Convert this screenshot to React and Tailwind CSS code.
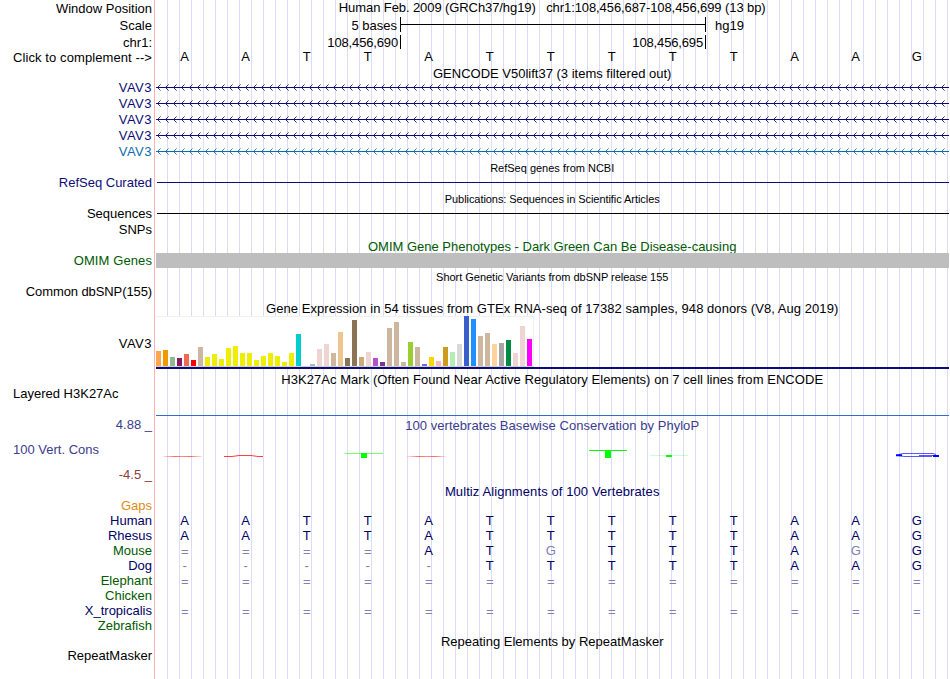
import React from "react";
import clsx from "clsx";

const BASES = "AATTATTTTTAAG";

const transcripts = [
  { id: 1, color: "text-[#0c0c78]" },
  { id: 2, color: "text-[#0c0c78]" },
  { id: 3, color: "text-[#0c0c78]" },
  { id: 4, color: "text-[#0c0c78]" },
  { id: 5, color: "text-[#0c6cb0]" },
];

// one entry per tissue: bar height and colour
const tissues = [
  [15, "#ffa54f"], [16, "#ee9a00"], [9, "#8fbc8f"], [8, "#8b1c62"], [12, "#ee6a50"], [6, "#ff0000"],
  [19, "#cdb79e"], [9, "#eeee00"], [12, "#eeee00"], [7, "#eeee00"], [18, "#eeee00"], [20, "#eeee00"],
  [13, "#eeee00"], [13, "#eeee00"], [6, "#eeee00"], [10, "#eeee00"], [13, "#eeee00"], [10, "#eeee00"],
  [4, "#eeee00"], [13, "#eeee00"], [32, "#00cdcd"], [0, "#ee82ee"], [2, "#9ac0cd"], [17, "#eed5d2"],
  [22, "#eed5d2"], [13, "#cdb79e"], [34, "#eec591"], [8, "#8b7355"], [46, "#8b7355"], [9, "#cdaa7d"],
  [14, "#eed5d2"], [8, "#b452cd"], [4, "#7a378b"], [38, "#cdb79e"], [44, "#cdb79e"], [4, "#cdb79e"],
  [24, "#9acd32"], [19, "#cdb79e"], [2, "#7a67ee"], [9, "#ffd700"], [5, "#ffb6c1"], [19, "#cd9b1d"],
  [14, "#b4eeb4"], [22, "#d9d9d9"], [50, "#3a5fcd"], [47, "#1e90ff"], [30, "#cdb79e"], [33, "#cdb79e"],
  [22, "#ffd39b"], [23, "#a6a6a6"], [26, "#008b45"], [13, "#eed5d2"], [40, "#eed5d2"], [27, "#ff00ff"],
];

const species = [
  { name: "Gaps", color: "text-[#e08c14]", seq: "" },
  { name: "Human", color: "text-[#000064]", seq: "AATTATTTTTAAG" },
  { name: "Rhesus", color: "text-[#000064]", seq: "AATTATTTTTAAG" },
  { name: "Mouse", color: "text-[#005a00]", seq: "====ATgTTTAgG" },
  { name: "Dog", color: "text-[#000064]", seq: "-----TTTTTAAG" },
  { name: "Elephant", color: "text-[#005a00]", seq: "=============" },
  { name: "Chicken", color: "text-[#005a00]", seq: "" },
  { name: "X_tropicalis", color: "text-[#000064]", seq: "=============" },
  { name: "Zebrafish", color: "text-[#005a00]", seq: "" },
];

const Row = ({ label, height, labelClass, className, children }) => (
  <div className={clsx("flex shrink-0", height)}>
    <div
      className={clsx(
        "flex w-[155px] shrink-0 items-center pr-[3px]",
        labelClass || "justify-end"
      )}
    >
      {label}
    </div>
    <div className={clsx("flex w-[794px] shrink-0 pl-px", className || "items-center")}>
      {children}
    </div>
  </div>
);

const Title = ({ className, children }) => (
  <div className={clsx("-ml-[0.3px] w-[793px] text-center whitespace-pre", className)}>
    {children}
  </div>
);

const Sequence = ({ seq, className }) => (
  <div className={clsx("-ml-[1.8px] flex", className)}>
    {seq.split("").map((base, index) => (
      <span
        key={index}
        className={clsx(
          "w-[61px] text-center",
          /[=g-]/.test(base) && "text-[#8080b2]",
          base === "=" && "translate-y-px"
        )}
      >
        {base.toUpperCase()}
      </span>
    ))}
  </div>
);

// intron line with strand arrows pointing left
const Intron = ({ id, className }) => (
  <svg width="793" height="16" className={className} shapeRendering="crispEdges">
    <defs>
      <pattern id={`strand-${id}`} width="8" height="16" x="1" patternUnits="userSpaceOnUse">
        <path d="M1 7h1v1h-1zM1 9h1v1h-1zM2 6h1v1h-1zM2 10h1v1h-1z" fill="currentColor" fillOpacity="0.85" />
        <path d="M3 5h1v1h-1zM3 11h1v1h-1z" fill="currentColor" fillOpacity="0.5" />
      </pattern>
    </defs>
    <rect y="8" width="793" height="1" fill="currentColor" />
    <rect width="793" height="16" fill={`url(#strand-${id})`} />
  </svg>
);

const GeneExpression = () => (
  <div className="w-[793px]">
    <div className="flex h-[51px] w-[378px] items-end gap-[2px] border-t border-r border-b border-t-[#f0f0f0] border-r-[#f0f0f0] border-b-[#d0d0d0] bg-white">
      {tissues.map(([height, color], index) => (
        <div
          key={index}
          className="w-[5px] shrink-0"
          style={{ height, backgroundColor: color }}
        />
      ))}
    </div>
    <div className="h-[2px] bg-[#0c0c78]" />
  </div>
);

// squashed base letters, scaled by their score
const Conservation = () => (
  <svg width="793" height="32">
    <defs>
      <linearGradient id="fade">
        <stop offset="0" stopColor="#f00" stopOpacity="0.1" />
        <stop offset="0.3" stopColor="#f00" stopOpacity="0.6" />
        <stop offset="0.5" stopColor="#f00" stopOpacity="0.45" />
        <stop offset="0.7" stopColor="#f00" stopOpacity="0.6" />
        <stop offset="1" stopColor="#f00" stopOpacity="0.1" />
      </linearGradient>
    </defs>
    <rect x="7" y="22" width="39" height="1" fill="url(#fade)" />
    <path d="M68 22.5L76 22.5L83 21.5H95L102 22.5H107" fill="none" stroke="#f00" strokeOpacity="0.75" />
    <rect x="251" y="22" width="39" height="1" fill="url(#fade)" />
    <g fill="#0f0" shapeRendering="crispEdges">
      <rect x="189" y="19" width="38" height="1" fillOpacity="0.55" />
      <rect x="205" y="19" width="6" height="5" />
      <rect x="433" y="16" width="38" height="1" />
      <rect x="449" y="16" width="6" height="8" />
      <rect x="494" y="21" width="38" height="1" fillOpacity="0.2" />
      <rect x="510" y="21" width="6" height="2" />
    </g>
    <g fill="none" stroke="#00f">
      <path d="M743 20.5L747 19.5H777L780 20.5M743 21.5L748 22.5H776M763 21.5H778" strokeOpacity="0.65" />
      <path d="M740 21.3H746M777 22H783" strokeWidth="2" />
    </g>
  </svg>
);

const App = () => {
  return (
    <div className="relative h-[679px] w-[950px] overflow-hidden bg-white font-['Liberation_Sans',Arial,sans-serif] text-[13px] leading-[14px] whitespace-nowrap text-black">
      {/* Guide lines behind every track */}
      <div className="absolute inset-y-0 left-[154px] w-px bg-[#ffb0b0]" />
      <div className="absolute inset-y-0 right-0 left-[167px] bg-[repeating-linear-gradient(to_right,#dcdcf8_0px,#dcdcf8_1px,transparent_1px,transparent_12px)]" />

      <div className="relative flex flex-col">
        {/* Position and ruler */}
        <Row label="Window Position" height="h-[17px]">
          <Title className="pb-px tracking-[-0.09px]">
            {"Human Feb. 2009 (GRCh37/hg19)   chr1:108,456,687-108,456,699 (13 bp)"}
          </Title>
        </Row>
        <Row label="Scale" height="h-[17px]">
          <div className="w-[241px] text-right">5 bases</div>
          <div className="mb-[2px] ml-[3px] flex h-[15px] w-[306px] items-center border-x border-black">
            <div className="h-px w-full bg-black" />
          </div>
          <div className="ml-[9px]">hg19</div>
        </Row>
        <Row label="chr1:" height="h-[16px]" labelClass="justify-end pt-px">
          <div className="flex h-[14px] w-[245px] items-center justify-end border-r border-black pt-[2px] pr-[2px] tracking-[-0.15px]">
            108,456,690
          </div>
          <div className="flex h-[14px] w-[305px] items-center justify-end border-r border-black pt-[2px] pr-[2px] tracking-[-0.15px]">
            108,456,695
          </div>
        </Row>
        <Row
          label="Click to complement -->"
          height="h-[15px]"
          labelClass="justify-end tracking-[0.09px]"
        >
          <Sequence seq={BASES} className="pb-[2px]" />
        </Row>

        {/* Genes */}
        <Row height="h-[14px]">
          <Title className="pt-[3px]">GENCODE V50lift37 (3 items filtered out)</Title>
        </Row>
        {transcripts.map(({ id, color }) => (
          <Row
            key={id}
            label="VAV3"
            height="h-[16px]"
            labelClass={clsx("justify-end pt-[2px] tracking-[0.5px]", color)}
          >
            <Intron id={id} className={color} />
          </Row>
        ))}
        <Row height="h-[17px]">
          <Title className="text-[11px]">RefSeq genes from NCBI</Title>
        </Row>
        <Row label="RefSeq Curated" height="h-[14px]" labelClass="justify-end text-[#0c0c78]">
          <div className="mb-px ml-px h-px w-[792px] bg-[#0c0c78]" />
        </Row>

        {/* Publications */}
        <Row height="h-[17px]">
          <Title className="text-[11px] tracking-[-0.06px]">
            Publications: Sequences in Scientific Articles
          </Title>
        </Row>
        <Row label="Sequences" height="h-[14px]">
          <div className="mb-px ml-px h-px w-[792px] bg-black" />
        </Row>
        <Row label="SNPs" height="h-[16px]" labelClass="justify-end pt-[2px]" />

        {/* Phenotypes and variants */}
        <Row height="h-[16px]">
          <Title className="pt-[3px] text-[#005a00]">
            OMIM Gene Phenotypes - Dark Green Can Be Disease-causing
          </Title>
        </Row>
        <Row
          label="OMIM Genes"
          height="h-[15px]"
          labelClass="justify-end tracking-[0.1px] text-[#005a00]"
        >
          <div className="h-[15px] w-[793px] bg-[#bebebe]" />
        </Row>
        <Row height="h-[17px]">
          <Title className="pt-px text-[11px] tracking-[-0.02px]">
            Short Genetic Variants from dbSNP release 155
          </Title>
        </Row>
        <Row
          label="Common dbSNP(155)"
          height="h-[14px]"
          labelClass="justify-end tracking-[-0.1px]"
        />

        {/* Expression */}
        <Row height="h-[17px]">
          <Title className="pt-[3px] tracking-[0.055px]">
            Gene Expression in 54 tissues from GTEx RNA-seq of 17382 samples, 948 donors (V8, Aug 2019)
          </Title>
        </Row>
        <Row label="VAV3" height="h-[53px]" labelClass="justify-end pt-[2px] tracking-[0.5px]">
          <GeneExpression />
        </Row>

        {/* Regulation */}
        <Row height="h-[20px]">
          <Title className="pt-[2px] tracking-[0.05px]">
            H3K27Ac Mark (Often Found Near Active Regulatory Elements) on 7 cell lines from ENCODE
          </Title>
        </Row>
        <Row
          label="Layered H3K27Ac"
          height="h-[27px]"
          labelClass="pb-[18px] pl-[13px]"
          className="items-end"
        >
          <div className="h-px w-[793px] bg-[#3070c8]" />
        </Row>

        {/* Conservation */}
        <Row label="4.88 _" height="h-[18px]" labelClass="justify-end text-[#3c3c8c]">
          <Title className="pt-[2px] tracking-[0.04px] text-[#3c3c8c]">
            100 vertebrates Basewise Conservation by PhyloP
          </Title>
        </Row>
        <Row
          label="100 Vert. Cons"
          height="h-[32px]"
          labelClass="pl-[13px] text-[#3c3c8c]"
        >
          <Conservation />
        </Row>
        <Row label="-4.5 _" height="h-[18px]" labelClass="justify-end text-[#8c3c3c]" />
        <Row height="h-[14px]">
          <Title className="pt-[2px] tracking-[0.1px] text-[#000064]">
            Multiz Alignments of 100 Vertebrates
          </Title>
        </Row>
        {species.map(({ name, color, seq }) => (
          <Row
            key={name}
            label={name}
            height="h-[15px]"
            labelClass={clsx("justify-end", color)}
          >
            <Sequence seq={seq} className="text-[#000064]" />
          </Row>
        ))}

        {/* Repeats */}
        <Row height="h-[16px]">
          <Title className="pt-[2px]">Repeating Elements by RepeatMasker</Title>
        </Row>
        <Row label="RepeatMasker" height="h-[14px]" />
      </div>
    </div>
  );
};

export default App;
